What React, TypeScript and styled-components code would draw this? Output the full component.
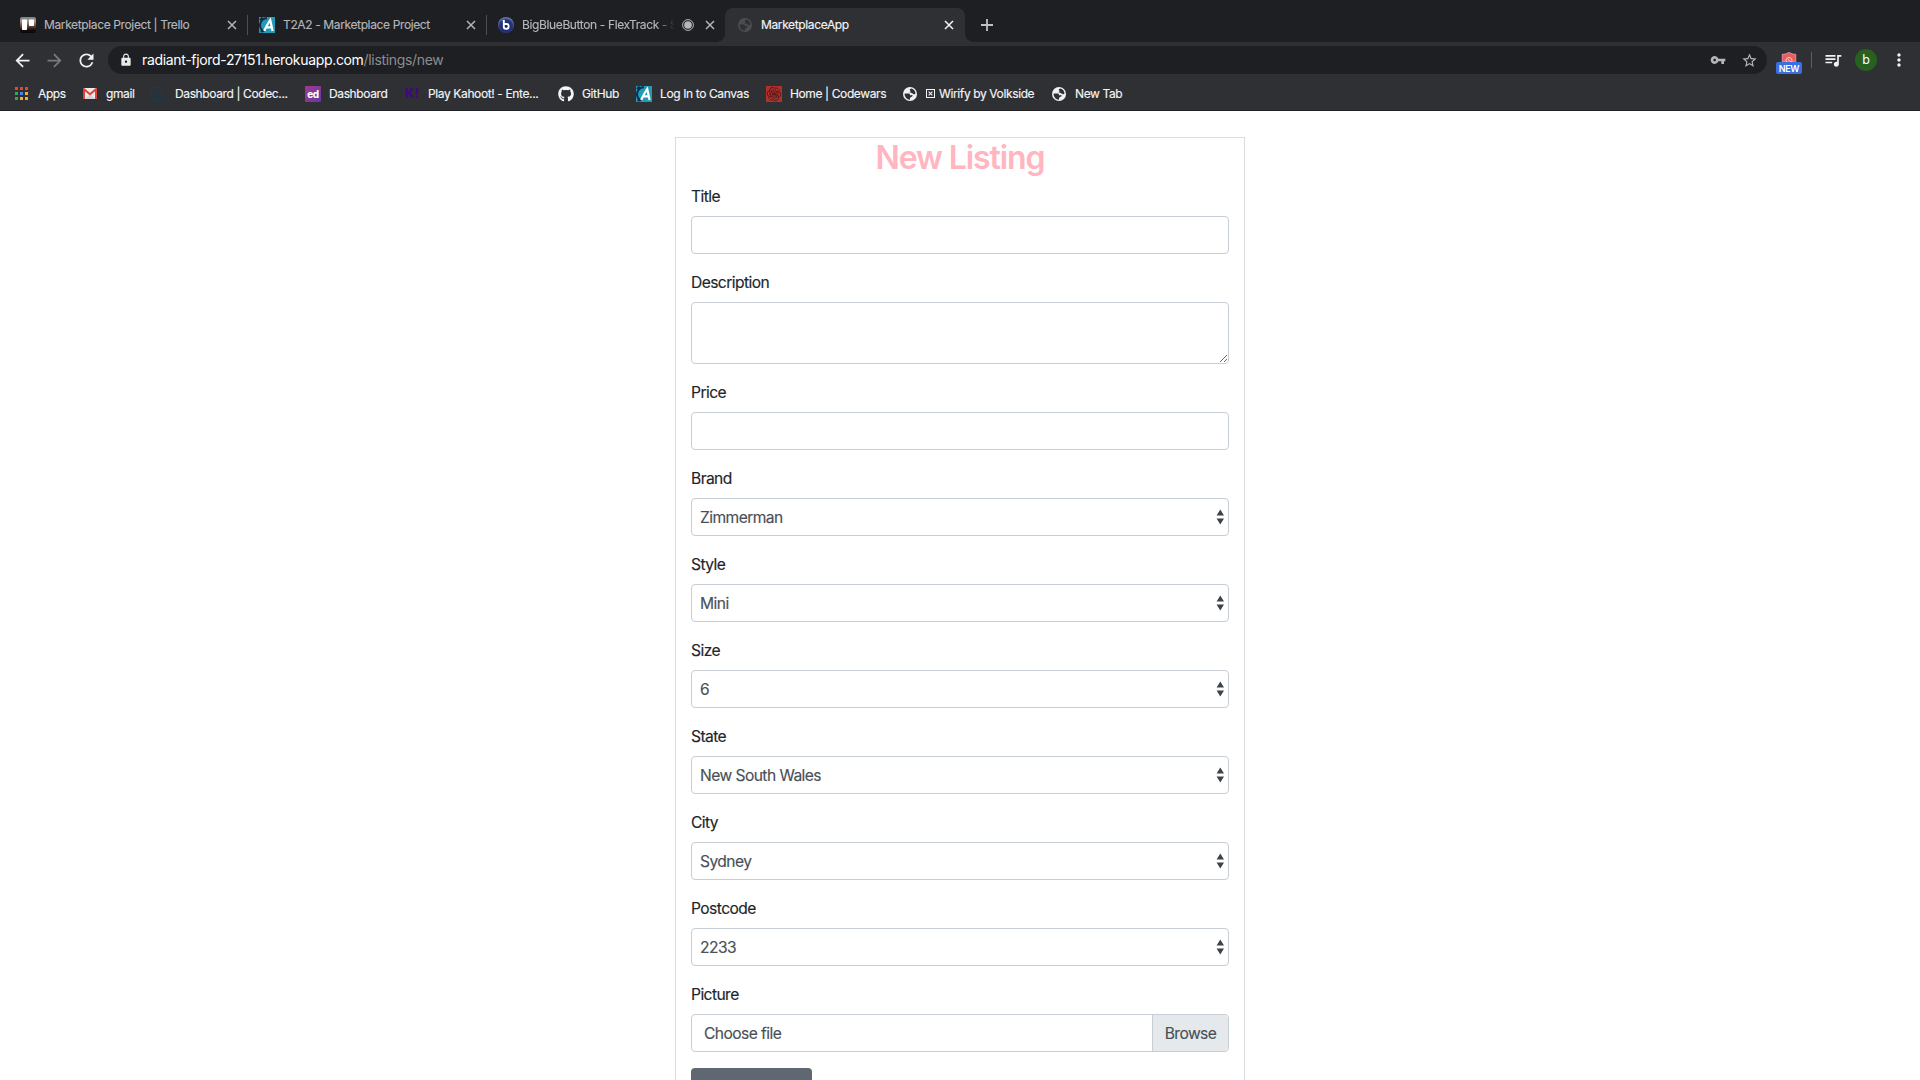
import React from 'react';
import styled, { createGlobalStyle, css } from 'styled-components';
import {
  MdArrowBack,
  MdArrowForward,
  MdLock,
  MdMoreVert,
  MdQueueMusic,
  MdRefresh,
  MdStarBorder,
  MdVpnKey,
} from 'react-icons/md';
import { FaGithub } from 'react-icons/fa';

const color = {
  strip: '#1e1f23',
  bar: '#2f3034',
  tabText: '#b4b6ba',
  border: '#c8ced5',
  cardBorder: '#d8dde1',
  ink: '#212529',
  field: '#495057',
};

const GlobalStyle = createGlobalStyle`
  *, *::before, *::after { box-sizing: border-box; }
  body {
    margin: 0;
    background: #fff;
    font-family: Inter, "Liberation Sans", sans-serif;
    overflow: hidden;
  }
  svg { flex: none; }
`;

const Window = styled.div`
  width: 1920px;
  height: 1080px;
  display: flex;
  flex-direction: column;
  overflow: hidden;
`;

/* ---------- Browser tabs ---------- */

const TabStrip = styled.div`
  flex: none;
  height: 42px;
  padding: 8px 0 0 9px;
  display: flex;
  background: ${color.strip};
`;

const TabItem = styled.div<{ $active?: boolean; $width: number }>`
  position: relative;
  width: ${p => p.$width}px;
  height: 34px;
  padding-left: ${p => (p.$active ? 12 : 11)}px;
  display: flex;
  align-items: center;
  gap: 8px;
  color: ${p => (p.$active ? '#f4f5f6' : color.tabText)};
  ${p =>
    p.$active &&
    css`
      background: ${color.bar};
      border-radius: 8px 8px 0 0;
      &::before,
      &::after {
        content: '';
        position: absolute;
        bottom: 0;
        width: 8px;
        height: 8px;
      }
      &::before {
        left: -8px;
        background: radial-gradient(circle at 0 0, transparent 7.5px, ${color.bar} 8px);
      }
      &::after {
        right: -8px;
        background: radial-gradient(circle at 100% 0, transparent 7.5px, ${color.bar} 8px);
      }
    `}
`;

const TabTitle = styled.span<{ $fade?: boolean }>`
  flex: 1;
  min-width: 0;
  white-space: nowrap;
  font-size: 12px;
  line-height: 18px;
  letter-spacing: -0.37px;
  -webkit-text-stroke: 0.15px currentColor;
  ${p => p.$fade && 'mask-image: linear-gradient(to right, #000 134px, transparent 153px);'}
`;

const TabEnd = styled.div<{ $divider?: boolean; $recording?: boolean }>`
  height: 20px;
  padding-right: ${p => (p.$divider || p.$recording ? 9 : 10)}px;
  display: flex;
  align-items: center;
  gap: 10px;
  border-right: ${p => (p.$divider ? '1px solid #4d4e52' : 'none')};
`;

const NewTab = styled.div`
  width: 44px;
  height: 34px;
  display: flex;
  align-items: center;
  justify-content: center;
  color: #bfc1c5;
`;

/* ---------- Address bar ---------- */

const Toolbar = styled.div`
  flex: none;
  height: 36px;
  display: flex;
  align-items: center;
  background: ${color.bar};
  color: #f1f2f3;
`;

const NavButtons = styled.div`
  width: 108px;
  padding-left: 11.5px;
  display: flex;
  gap: 11px;
`;

const NavIcon = styled.span<{ $dim?: boolean }>`
  display: flex;
  font-size: 21px;
  color: ${p => (p.$dim ? '#797a7e' : '#f1f2f3')};
`;

const Omnibox = styled.div`
  width: 1659px;
  height: 28px;
  padding: 0 9px 0 11px;
  display: flex;
  align-items: center;
  border-radius: 14px;
  background: ${color.strip};
  color: #b5b6b8;
`;

const LockIcon = styled(MdLock)`
  margin-bottom: 1px;
  color: #e8e9ea;
`;

const Address = styled.span`
  flex: 1;
  padding-left: 9px;
  font-size: 14px;
  line-height: 20px;
  letter-spacing: -0.33px;
  color: #8c8d90;
  white-space: pre;
`;

const Host = styled.span`
  color: #fff;
`;

const OmniIcon = styled.span`
  display: flex;
  margin-left: 15px;
`;

const Extensions = styled.div`
  flex: 1;
  height: 28px;
  padding-left: 9px;
  display: flex;
  align-items: center;
`;

const ShieldBox = styled.div`
  width: 26px;
  height: 28px;
  padding-top: 6px;
  display: flex;
  flex-direction: column;
  align-items: center;
`;

const NewBadge = styled.span`
  width: 26px;
  height: 12px;
  border-radius: 2px;
  background: #3a6fe0;
  color: #fff;
  font-size: 9px;
  font-weight: 600;
  line-height: 13px;
  letter-spacing: -0.35px;
  text-align: center;
`;

const Divider = styled.span`
  width: 1px;
  height: 16px;
  margin: 0 11px 0 9px;
  background: #5d5e62;
`;

const Avatar = styled.span`
  width: 22px;
  height: 22px;
  margin: 0 12px 0 12px;
  border-radius: 50%;
  background: #27601f;
  color: #fff;
  font-size: 12.5px;
  line-height: 22px;
  text-align: center;
`;

/* ---------- Bookmarks ---------- */

const Bookmarks = styled.div`
  flex: none;
  height: 33px;
  padding: 0 0 1px 14px;
  display: flex;
  background: ${color.bar};
  border-bottom: 1px solid #202125;
`;

const Bookmark = styled.div<{ $width: number }>`
  flex: none;
  width: ${p => p.$width}px;
  display: flex;
  align-items: center;
  gap: 8px;
  color: #f4f5f6;
  font-size: 12px;
  line-height: 15px;
  letter-spacing: -0.38px;
  white-space: nowrap;
  -webkit-text-stroke: 0.15px currentColor;
`;

const BookmarkText = styled.span`
  display: flex;
  align-items: center;
  gap: 4px;
  padding-bottom: 1px;
`;

const IconSlot = styled.span`
  flex: none;
  width: 16px;
  height: 16px;
  display: flex;
  align-items: center;
  justify-content: center;
`;

const AppsGrid = styled.span`
  margin-right: 1px;
  display: grid;
  grid-template-columns: repeat(3, 3px);
  gap: 2px;
`;

const AppsDot = styled.i<{ $fill: string }>`
  height: 3px;
  background: ${p => p.$fill};
`;

const EdMark = styled.span`
  width: 16px;
  height: 16px;
  border-radius: 1px;
  background: linear-gradient(135deg, #a33a8c, #6537a8);
  color: #fff;
  font-size: 10px;
  font-weight: 700;
  line-height: 16px;
  text-align: center;
`;

const KahootMark = styled.span`
  color: #3d0a80;
  font-size: 13px;
  font-weight: 800;
  letter-spacing: 0;
`;

/* ---------- Listing form ---------- */

const Page = styled.main`
  flex: 1;
  min-height: 0;
  padding-top: 26px;
  display: flex;
  justify-content: center;
  align-items: flex-start;
  overflow: hidden;
`;

const Card = styled.form`
  width: 570px;
  height: 1000px;
  padding: 0 15px;
  border: 1px solid ${color.cardBorder};
`;

const Heading = styled.h1`
  margin: 0 0 8px;
  color: #ffb6c1;
  font-size: 32px;
  font-weight: 600;
  height: 38px;
  line-height: 40px;
  letter-spacing: -1.08px;
  text-align: center;
`;

const Group = styled.div`
  margin-bottom: 16px;
  display: flex;
  flex-direction: column;
  gap: 8px;
`;

const Label = styled.label`
  height: 24px;
  padding-top: 1px;
  color: ${color.ink};
  font-size: 15.6px;
  line-height: 24px;
  letter-spacing: -0.57px;
  -webkit-text-stroke: 0.15px currentColor;
`;

const control = css`
  width: 100%;
  margin: 0;
  border: 1px solid ${color.border};
  border-radius: 4px;
  background: #fff;
  color: ${color.field};
  font-family: inherit;
  font-size: 15.6px;
  line-height: 24px;
  letter-spacing: -0.56px;
  outline: none;
`;

const TextInput = styled.input`
  ${control}
  height: 38px;
  padding: 6px 12px;
`;

const TextArea = styled.textarea`
  ${control}
  display: block;
  height: 62px;
  padding: 6px 12px;
`;

const SelectBox = styled.div`
  ${control}
  height: 38px;
  padding: 0 4px 0 8px;
  display: flex;
  align-items: center;
  justify-content: space-between;
`;

const FileBox = styled.div`
  ${control}
  height: 38px;
  padding-left: 12px;
  display: flex;
  align-items: center;
  justify-content: space-between;
  overflow: hidden;
`;

const Value = styled.span`
  padding-top: 2px;
  -webkit-text-stroke: 0.15px currentColor;
`;

const Browse = styled.span`
  width: 76px;
  height: 36px;
  border-left: 1px solid ${color.border};
  background: #e5e9ec;
  line-height: 38px;
  text-align: center;
  -webkit-text-stroke: 0.15px currentColor;
`;

const Submit = styled.button`
  display: block;
  width: 121px;
  height: 38px;
  border: 0;
  border-radius: 4px;
  background: #5f6871;
`;

/* ---------- Drawings ---------- */

const Close = () => (
  <svg width="12" height="12" viewBox="0 0 12 12" stroke="currentColor" strokeWidth="1.5">
    <path d="M2 2l8 8M10 2l-8 8" />
  </svg>
);

const Plus = () => (
  <svg width="12" height="12" viewBox="0 0 12 12" stroke="currentColor" strokeWidth="1.8">
    <path d="M6 0v12M0 6h12" />
  </svg>
);

const Recording = () => (
  <svg width="12" height="12" viewBox="0 0 12 12">
    <circle cx="6" cy="6" r="5.4" fill="none" stroke="currentColor" />
    <circle cx="6" cy="6" r="3.8" fill="currentColor" />
  </svg>
);

const Globe = ({ ground, land }: { ground: string; land: string }) => (
  <svg width="14" height="14" viewBox="0 0 14 14">
    <circle cx="7" cy="7" r="7" fill={ground} />
    <path
      d="M1.500 6.700c1.500-.2 3.700-.5 5 .1.900.5.2 1.500 1.200 1.600.8 0 .8-.6 1.500-.4.700.4.300 1.400-.5 1.800-.8.500-1.500.4-1.600 1.200l-.1 1.700C4 12.500 1.600 10 1.500 6.700zM8.600 1.600c-1.100.3-2 .8-1.900 1.500.1.600 1 .5.900 1.200-.1.600-1 .5-.9 1.200.1.800 1.500.5 2.300.7 1 .2 1.100 1.100 2 1.100.7 0 1.100-.5 1.500-.9-.2-2.300-1.700-4.200-3.900-4.800z"
      fill={land}
    />
  </svg>
);

const TrelloIcon = () => (
  <svg width="16" height="16" viewBox="0 0 16 16">
    <defs>
      <linearGradient id="photo" x1="0" y1="0" x2="0" y2="1">
        <stop offset="0" stopColor="#75858a" />
        <stop offset=".25" stopColor="#a59a8e" />
        <stop offset=".55" stopColor="#70473a" />
        <stop offset=".8" stopColor="#17100f" />
        <stop offset="1" stopColor="#080808" />
      </linearGradient>
    </defs>
    <rect width="16" height="16" rx="2" fill="url(#photo)" />
    <rect x="2" y="2.500" width="5" height="10.500" rx=".7" fill="#fff" />
    <rect x="9" y="2.500" width="5" height="6.500" rx=".7" fill="#fff" />
  </svg>
);

const CanvasIcon = () => (
  <svg width="16" height="16" viewBox="0 0 16 16">
    <rect width="16" height="16" fill="#249ab9" />
    <path d="M8 1.200A7 7 0 0 0 3.500 13.500M1 3 3.500.5M1.500 14.500l4-.5" fill="none" stroke="#0f2c4c" strokeWidth="2" />
    <path d="M5.200 14C7 10 8.500 7 11.200 3l2.400 11M7.500 10.300h5.500" fill="none" stroke="#fff" strokeWidth="2.200" />
  </svg>
);

const BigBlueIcon = () => (
  <svg width="16" height="16" viewBox="0 0 16 16">
    <defs>
      <radialGradient id="ball" cx=".5" cy=".6" r=".55">
        <stop offset="0" stopColor="#13206a" />
        <stop offset=".75" stopColor="#27357f" />
        <stop offset="1" stopColor="#6872ab" />
      </radialGradient>
    </defs>
    <circle cx="8" cy="8" r="8" fill="url(#ball)" />
    <path d="M5.800 3v6.700a2 2 0 0 0 2 2h.8a2 2 0 0 0 2-2V9a2 2 0 0 0-2-2H6" fill="none" stroke="#fff" strokeWidth="1.900" />
  </svg>
);

const GmailIcon = () => (
  <svg width="14" height="11" viewBox="0 0 14 11">
    <rect width="14" height="11" rx="1" fill="#eceaea" />
    <path d="M2 11l5-5 5 5z" fill="#d4d2d2" />
    <path d="M1 11V1.200l6 5 6-5V11" fill="none" stroke="#db4437" strokeWidth="2" />
  </svg>
);

const CodecademyIcon = () => (
  <svg width="16" height="14" viewBox="0 0 16 14" fill="none" stroke="#193b50">
    <rect x=".7" y=".7" width="9.600" height="12.600" rx="1" strokeWidth="1.200" />
    <path d="M7.500 5.200C5.500 4 3.700 5 3.700 7s1.800 3 3.800 1.800M12 13.200h4" strokeWidth="1.200" />
  </svg>
);

const CodewarsIcon = () => (
  <svg width="16" height="16" viewBox="0 0 16 16">
    <rect width="16" height="16" fill="#b1302a" />
    <g fill="none" stroke="#4d1c1b" strokeWidth=".9">
      {[0, 60, 120, 180, 240, 300].map(turn => (
        <path key={turn} transform={`rotate(${turn} 8 8)`} d="M8 8c-.5-2 .2-3.500 2-4.200M6.600 5.400C7 3.500 8 2.200 10 1.900c1.700.2 3 1.300 3.400 2.800" />
      ))}
    </g>
  </svg>
);

const BoxedX = () => (
  <svg width="9" height="9" viewBox="0 0 9 9" fill="none" stroke="currentColor">
    <rect x=".5" y=".5" width="8" height="8" />
    <path d="M2.600 2.600l3.800 3.800M6.400 2.600L2.600 6.400" strokeWidth="1.100" />
  </svg>
);

const Shield = () => (
  <svg width="16" height="10" viewBox="0 0 16 10">
    <path d="M8 .3c1.900 1.300 4 1.900 6.800 2V10H1.200V2.300C4 2.200 6.100 1.600 8 .3z" fill="#ee5a5d" stroke="#d9c5c7" strokeWidth=".6" />
    <path d="M5.400 10a3 3 0 1 1 5.200 0M6.600 7l3.200 3" fill="none" stroke="#f6d5d6" />
  </svg>
);

const Carets = () => (
  <svg width="8" height="16" viewBox="0 0 8 16" fill="#3c444b">
    <path d="M4.300 .6L.6 6.600H8zM4.300 15.600L.6 9.600H8z" />
  </svg>
);

const APPS_COLORS = ['#ea4335', '#ea4335', '#ea4335', '#34a853', '#4285f4', '#fbab2a', '#34a853', '#fbab2a', '#fbab2a'];

const tabs = [
  { title: 'Marketplace Project | Trello', icon: <TrelloIcon />, width: 239, divider: true },
  { title: 'T2A2 - Marketplace Project', icon: <CanvasIcon />, width: 239, divider: true },
  { title: 'BigBlueButton - FlexTrack - S', icon: <BigBlueIcon />, width: 238, recording: true },
  { title: 'MarketplaceApp', icon: <Globe ground="#4c4d51" land="#2f3034" />, width: 240, active: true },
];

const bookmarks = [
  {
    text: 'Apps',
    width: 68,
    icon: (
      <AppsGrid>
        {APPS_COLORS.map((fill, i) => (
          <AppsDot key={i} $fill={fill} />
        ))}
      </AppsGrid>
    ),
  },
  { text: 'gmail', width: 69, icon: <GmailIcon /> },
  { text: 'Dashboard | Codec...', width: 154, icon: <CodecademyIcon /> },
  { text: 'Dashboard', width: 99, icon: <EdMark>ed</EdMark> },
  { text: 'Play Kahoot! - Ente...', width: 154, icon: <KahootMark>K!</KahootMark> },
  { text: 'GitHub', width: 78, icon: <FaGithub size={16} /> },
  { text: 'Log In to Canvas', width: 130, icon: <CanvasIcon /> },
  { text: 'Home | Codewars', width: 136, icon: <CodewarsIcon /> },
  { text: 'Wirify by Volkside', width: 149, boxed: true, icon: <Globe ground="#f1f2f3" land="#2f3034" /> },
  { text: 'New Tab', width: 90, icon: <Globe ground="#f1f2f3" land="#2f3034" /> },
];

const selects = [
  ['Brand', 'Zimmerman'],
  ['Style', 'Mini'],
  ['Size', '6'],
  ['State', 'New South Wales'],
  ['City', 'Sydney'],
  ['Postcode', '2233'],
];

export default function App() {
  return (
    <Window>
      <GlobalStyle />
      <TabStrip>
        {tabs.map(tab => (
          <TabItem key={tab.title} $width={tab.width} $active={tab.active}>
            <IconSlot>{tab.icon}</IconSlot>
            <TabTitle $fade={tab.recording}>{tab.title}</TabTitle>
            <TabEnd $divider={tab.divider} $recording={tab.recording}>
              {tab.recording && <Recording />}
              <Close />
            </TabEnd>
          </TabItem>
        ))}
        <NewTab>
          <Plus />
        </NewTab>
      </TabStrip>

      <Toolbar>
        <NavButtons>
          <NavIcon><MdArrowBack /></NavIcon>
          <NavIcon $dim><MdArrowForward /></NavIcon>
          <NavIcon><MdRefresh /></NavIcon>
        </NavButtons>
        <Omnibox>
          <LockIcon size={14} />
          <Address>
            <Host>radiant-fjord-27151.herokuapp.com</Host>/listings/new
          </Address>
          <OmniIcon><MdVpnKey size={16} /></OmniIcon>
          <OmniIcon><MdStarBorder size={17} /></OmniIcon>
        </Omnibox>
        <Extensions>
          <ShieldBox>
            <Shield />
            <NewBadge>NEW</NewBadge>
          </ShieldBox>
          <Divider />
          <MdQueueMusic size={20} />
          <Avatar>b</Avatar>
          <MdMoreVert size={20} />
        </Extensions>
      </Toolbar>

      <Bookmarks>
        {bookmarks.map((item, i) => (
          <Bookmark key={i} $width={item.width}>
            <IconSlot>{item.icon}</IconSlot>
            <BookmarkText>
              {item.boxed && <BoxedX />}
              {item.text}
            </BookmarkText>
          </Bookmark>
        ))}
      </Bookmarks>

      <Page>
        <Card>
          <Heading>New Listing</Heading>
          <Group>
            <Label>Title</Label>
            <TextInput />
          </Group>
          <Group>
            <Label>Description</Label>
            <TextArea />
          </Group>
          <Group>
            <Label>Price</Label>
            <TextInput />
          </Group>
          {selects.map(([label, value]) => (
            <Group key={label}>
              <Label>{label}</Label>
              <SelectBox>
                <Value>{value}</Value>
                <Carets />
              </SelectBox>
            </Group>
          ))}
          <Group>
            <Label>Picture</Label>
            <FileBox>
              <Value>Choose file</Value>
              <Browse>Browse</Browse>
            </FileBox>
          </Group>
          <Submit type="button" />
        </Card>
      </Page>
    </Window>
  );
}
